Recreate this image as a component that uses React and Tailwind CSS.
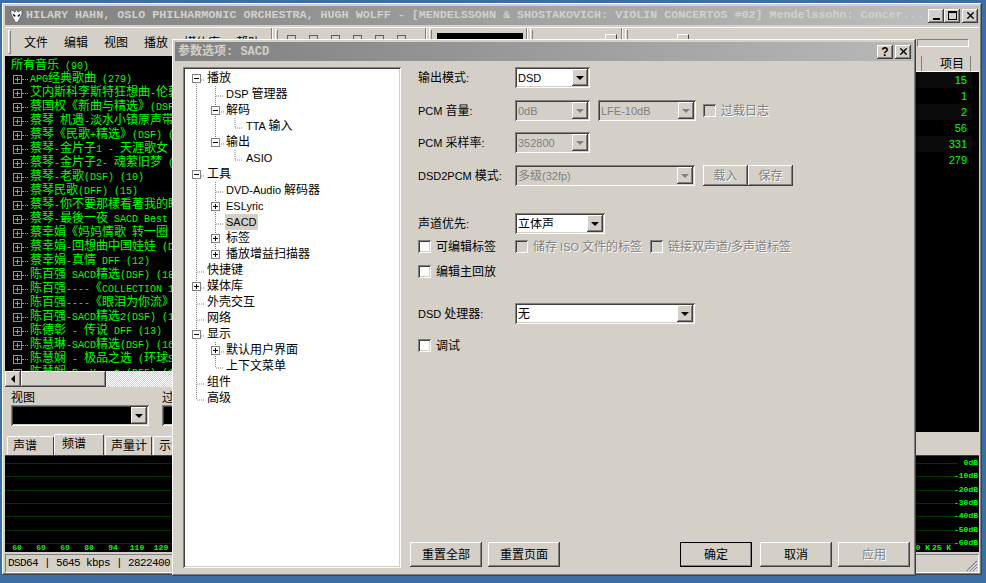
import { X } from "lucide-react";

const RAISED = "shadow-[inset_-1px_-1px_0_#404040,inset_1px_1px_0_#ffffff,inset_-2px_-2px_0_#808080]";
const SUNKEN = "shadow-[inset_1px_1px_0_#808080,inset_-1px_-1px_0_#ffffff,inset_2px_2px_0_#404040,inset_-2px_-2px_0_#d4d0c8]";
const DISABLED = "text-[#808080] [text-shadow:1px_1px_0_#ffffff]";
const CJK = "font-['Liberation_Sans','Noto_Sans_CJK_SC',sans-serif]";
const MONO = "font-['Liberation_Mono','Noto_Sans_CJK_SC',monospace]";

const LIBRARY = [
    "APG经典歌曲 (279)",
    "艾内斯科李斯特狂想曲-伦敦",
    "蔡国权《新曲与精选》(DSF)",
    "蔡琴 机遇-淡水小镇原声带",
    "蔡琴《民歌+精选》(DSF) (",
    "蔡琴-金片子1 - 天涯歌女 (",
    "蔡琴-金片子2- 魂萦旧梦 (D",
    "蔡琴-老歌(DSF) (10)",
    "蔡琴民歌(DFF) (15)",
    "蔡琴-你不要那樣看著我的眼",
    "蔡琴-最後一夜 SACD Best",
    "蔡幸娟《妈妈情歌 转一圈",
    "蔡幸娟-回想曲中国娃娃 (DS",
    "蔡幸娟-真情 DFF (12)",
    "陈百强 SACD精选(DSF) (18",
    "陈百强----《COLLECTION 1",
    "陈百强----《眼泪为你流》",
    "陈百强-SACD精选2(DSF) (1",
    "陈德彰 - 传说 DFF (13)",
    "陈慧琳-SACD精选(DSF) (16",
    "陈慧娴 - 极品之选 (环球SA",
    "陈慧娴 R. Y.. t (DFF) (1",
];

const TREE = [
    { label: "播放", level: 0, box: "-" },
    { label: "DSP 管理器", level: 1 },
    { label: "解码", level: 1, box: "-" },
    { label: "TTA 输入", level: 2 },
    { label: "输出", level: 1, box: "-" },
    { label: "ASIO", level: 2 },
    { label: "工具", level: 0, box: "-" },
    { label: "DVD-Audio 解码器", level: 1 },
    { label: "ESLyric", level: 1, box: "+" },
    { label: "SACD", level: 1, selected: true },
    { label: "标签", level: 1, box: "+" },
    { label: "播放增益扫描器", level: 1, box: "+" },
    { label: "快捷键", level: 0 },
    { label: "媒体库", level: 0, box: "+" },
    { label: "外壳交互", level: 0 },
    { label: "网络", level: 0 },
    { label: "显示", level: 0, box: "-" },
    { label: "默认用户界面", level: 1, box: "+" },
    { label: "上下文菜单", level: 1 },
    { label: "组件", level: 0 },
    { label: "高级", level: 0 },
];

// half-width latin like the bitmap font, full-width CJK
function Mix({ text, latin = "text-[10px] font-['Liberation_Mono']" }) {
    return text.split(/([\x20-\x7e]+)/).map((part, i) =>
        i % 2 ? <span key={i} className={`${latin} whitespace-pre`}>{part}</span> : part
    );
}

function Grip() {
    return <div className="w-[3px] h-[24px] shrink-0 border-l border-t border-white border-r border-b border-r-[#808080] border-b-[#808080]" />;
}

function CaptionButton({ children, className = "" }) {
    return (
        <div className={`w-4 h-[14px] bg-[#d4d0c8] flex items-center justify-center text-black ${RAISED} ${className}`}>
            {children}
        </div>
    );
}

function ExpandBox({ type, color = "border-[#808080]", mark = "bg-black" }) {
    return (
        <span className={`relative w-[9px] h-[9px] shrink-0 border ${color} block`}>
            <span className={`absolute left-[1px] top-[3px] w-[5px] h-[1px] ${mark}`} />
            {type === "+" && <span className={`absolute left-[3px] top-[1px] w-[1px] h-[5px] ${mark}`} />}
        </span>
    );
}

function Arrow({ disabled }) {
    return (
        <span className={`w-[16px] h-[17px] mr-[2px] bg-[#d4d0c8] flex items-center justify-center ${RAISED}`}>
            <span className={`w-0 h-0 border-x-[4px] border-x-transparent border-t-[4px] ${disabled ? "border-t-[#808080]" : "border-t-black"}`} />
        </span>
    );
}

function Combo({ value, width, disabled, black, className = "" }) {
    const bg = black ? "bg-black" : disabled ? "bg-[#d4d0c8]" : "bg-white";
    return (
        <div className={`${width} h-[21px] shrink-0 flex items-center justify-between pl-[3px] ${bg} ${SUNKEN} ${className}`}>
            <span className={`truncate ${disabled ? "text-[#808080]" : "text-black"}`}>
                {value && <Mix text={value} latin="text-[11px] font-['Liberation_Sans']" />}
            </span>
            <Arrow disabled={disabled} />
        </div>
    );
}

function Check({ label, disabled, className = "" }) {
    return (
        <div className={`flex items-center gap-[5px] h-[13px] ${className}`}>
            <span className={`w-[13px] h-[13px] shrink-0 ${disabled ? "bg-[#d4d0c8]" : "bg-white"} ${SUNKEN}`} />
            <span className={disabled ? DISABLED : "text-black"}>
                <Mix text={label} latin="text-[11px] font-['Liberation_Sans']" />
            </span>
        </div>
    );
}

function FormRow({ label, className = "", children }) {
    return (
        <div className={`flex items-center h-[21px] pl-[9px] ${className}`}>
            <span className="w-[97px] shrink-0">
                <Mix text={label} latin="text-[11px] font-['Liberation_Sans']" />
            </span>
            {children}
        </div>
    );
}

function DialogButton({ children, width = "w-[72px]", className = "", disabled }) {
    return (
        <div className={`${width} h-[25px] flex items-center justify-center bg-[#d4d0c8] ${disabled ? DISABLED : "text-black"} ${RAISED} ${className}`}>
            {children}
        </div>
    );
}

function TreeLines() {
    const h = (x1, x2, y) => `M${x1} ${y}H${x2}`;
    const v = (x, y1, y2) => `M${x} ${y1}V${y2}`;
    const d = [
        v(13.5, 14, 330),
        h(14, 22, 10), h(14, 22, 106), h(14, 22, 202), h(14, 22, 218), h(14, 22, 234), h(14, 22, 250), h(14, 22, 266), h(14, 22, 314), h(14, 22, 330),
        v(32.5, 16, 74), h(33, 41, 26), h(38, 41, 42), h(38, 41, 74),
        v(52, 48, 58), h(52, 60, 58), v(52, 80, 90), h(52, 60, 90),
        v(32.5, 112, 186), h(33, 41, 122), h(33, 41, 154),
        v(32.5, 272, 298), h(38, 41, 282), h(33, 41, 298),
    ].join("");
    return (
        <svg className="absolute left-0 top-[3px] pointer-events-none" width="100" height="340">
            <path d={d} stroke="#808080" strokeDasharray="1 1" fill="none" />
        </svg>
    );
}

function Dialog() {
    return (
        <div className={`absolute left-[172px] top-[39px] w-[744px] h-[537px] p-[3px] flex flex-col bg-[#d4d0c8] ${RAISED}`}>
            <div className="h-[19px] shrink-0 flex items-center pl-[3px] pr-[2px] bg-gradient-to-r from-[#808080] to-[#b8b8b8]">
                <span className="flex-1 font-bold text-[#d4d0c8]">
                    <Mix text="参数选项: SACD" latin="text-[12px] font-['Liberation_Mono']" />
                </span>
                <CaptionButton className="font-bold"><span className="text-[12px] font-['Liberation_Sans']">?</span></CaptionButton>
                <CaptionButton className="ml-[2px]"><X size={11} strokeWidth={3} /></CaptionButton>
            </div>
            <div className="flex-1 flex pt-[6px] pl-[8px] pb-[5px] pr-[3px]">
                <div className={`relative w-[218px] bg-white pt-[3px] ${SUNKEN}`}>
                    <TreeLines />
                    {TREE.map((row) => (
                        <div
                            key={row.label}
                            className={`relative h-4 flex items-center ${row.level === 0 ? "pl-[9px]" : row.level === 1 ? "pl-[28px]" : "pl-[48px]"}`}
                        >
                            {row.box ? <span className="bg-white"><ExpandBox type={row.box} /></span> : <span className="w-[9px]" />}
                            <span className={`ml-[5px] pl-[1px] pr-[1px] leading-4 text-black whitespace-nowrap ${row.selected ? "bg-[#d4d0c8]" : "bg-white"}`}>
                                <Mix text={row.label} latin="text-[11px] font-['Liberation_Sans']" />
                            </span>
                        </div>
                    ))}
                </div>
                <div className="flex-1 flex flex-col ml-[8px]">
                    <FormRow label="输出模式:"><Combo value="DSD" width="w-[75px]" /></FormRow>
                    <FormRow label="PCM 音量:" className="mt-[12px]">
                        <Combo value="0dB" width="w-[75px]" disabled />
                        <Combo value="LFE-10dB" width="w-[98px]" disabled className="ml-[8px]" />
                        <Check label="过载日志" disabled className="ml-[7px]" />
                    </FormRow>
                    <FormRow label="PCM 采样率:" className="mt-[11px]"><Combo value="352800" width="w-[75px]" disabled /></FormRow>
                    <FormRow label="DSD2PCM 模式:" className="mt-[12px]">
                        <Combo value="多级(32fp)" width="w-[180px]" disabled />
                        <DialogButton width="w-[45px]" className="ml-[8px] !h-[21px]" disabled>载入</DialogButton>
                        <DialogButton width="w-[45px]" className="!h-[21px]" disabled>保存</DialogButton>
                    </FormRow>
                    <FormRow label="声道优先:" className="mt-[27px]"><Combo value="立体声" width="w-[90px]" /></FormRow>
                    <div className="flex pl-[9px] mt-[6px]">
                        <Check label="可编辑标签" className="w-[97px]" />
                        <Check label="储存 ISO 文件的标签" disabled className="w-[135px]" />
                        <Check label="链接双声道/多声道标签" disabled />
                    </div>
                    <Check label="编辑主回放" className="ml-[9px] mt-[12px]" />
                    <FormRow label="DSD 处理器:" className="mt-[25px]"><Combo value="无" width="w-[180px]" /></FormRow>
                    <Check label="调试" className="ml-[9px] mt-[15px]" />
                    <div className="mt-auto mb-[1px] ml-[1px] flex">
                        <DialogButton>重置全部</DialogButton>
                        <DialogButton className="ml-[6px]">重置页面</DialogButton>
                        <DialogButton className="ml-auto ring-1 ring-black ring-inset">确定</DialogButton>
                        <DialogButton className="ml-[8px]">取消</DialogButton>
                        <DialogButton className="ml-[6px]" disabled>应用</DialogButton>
                    </div>
                </div>
            </div>
        </div>
    );
}

function Logo() {
    return (
        <svg width="13" height="15" viewBox="0 0 13 15" className="shrink-0">
            <path d="M6.5 1 8 4 12 1.5 12 6 9.5 11 7.5 14.5H5.5L3.500 11 1 6 1 1.500 5 4Z" fill="#ffffff" stroke="#303030" strokeWidth="0.6" />
            <path d="M2.500 5.500 5.500 7.500 5 9 3.500 8ZM10.500 5.500 7.500 7.500 8 9 9.500 8Z" fill="#000000" />
        </svg>
    );
}

function TitleBar() {
    return (
        <div className="h-[19px] shrink-0 flex items-center pl-[5px] pr-[1px] bg-gradient-to-r from-[#808080] to-[#c0c0c0]">
            <Logo />
            <span className={`ml-[3px] flex-1 whitespace-nowrap font-bold text-[11.7px] text-[#d4d0c8] ${MONO}`}>
                HILARY HAHN, OSLO PHILHARMONIC ORCHESTRA, HUGH WOLFF - [MENDELSSOHN &amp; SHOSTAKOVICH: VIOLIN CONCERTOS #02] Mendelssohn: Concer...
            </span>
            <CaptionButton className="items-end pb-[3px]"><span className="w-[7px] h-[2px] bg-black" /></CaptionButton>
            <CaptionButton><span className="w-[9px] h-[9px] border border-black border-t-2" /></CaptionButton>
            <CaptionButton className="ml-[2px]"><X size={11} strokeWidth={3} /></CaptionButton>
        </div>
    );
}

function Toolbar() {
    return (
        <div className="h-[29px] mt-[2px] shrink-0 flex border-t border-white">
            <div className="w-[267px] flex items-center pl-[3px] border-r border-[#808080]">
                <Grip />
                <div className="flex gap-4 ml-[13px] pt-[1px] text-black">
                    <span>文件</span><span>编辑</span><span>视图</span><span>播放</span><span>媒体库</span><span>帮助</span>
                </div>
            </div>
            <div className="w-[154px] flex items-start pl-[2px] pt-[1px] border-l border-white border-r border-r-[#808080]">
                <Grip />
                <div className="flex gap-[13px] ml-[9px] mt-[6px]">
                    {[0, 1, 2, 3, 4, 5].map((i) => <span key={i} className="w-[9px] h-[10px] border border-[#606060]" />)}
                </div>
            </div>
            <div className="w-[101px] flex items-start pl-[2px] pt-[1px] border-l border-white border-r border-r-[#808080]">
                <Grip />
                <span className="ml-[5px] mt-[4px] w-[86px] h-[14px] bg-black" />
            </div>
            <div className="w-[95px] flex items-start pl-[2px] pt-[1px] border-l border-white border-r border-r-[#808080]">
                <Grip />
                <span className="ml-[72px] mt-[5px] w-3 h-3 border-t border-l border-white border-r border-r-[#404040]" />
            </div>
            <div className="flex-1 flex items-start pl-[2px] pt-[1px] border-l border-white">
                <Grip />
                <span className="ml-[49px] mt-[5px] w-3 h-3 border-t border-l border-white border-r border-r-[#404040]" />
                <span className="ml-auto mr-[10px] mt-[10px] w-[52px] h-[8px] border border-white border-t-[#808080] border-l-[#808080]" />
            </div>
        </div>
    );
}

function LibraryPanel() {
    return (
        <div className="w-[340px] shrink-0 flex flex-col overflow-hidden">
            <div className="h-[315px] shrink-0 bg-black text-[#00ff00] pt-[2px] overflow-hidden whitespace-nowrap">
                <div className="h-[14px] pl-[6px] leading-[14px]"><Mix text="所有音乐 (90)" /></div>
                {LIBRARY.map((name) => (
                    <div key={name} className="h-[14px] flex items-center pl-[8px] leading-[14px]">
                        <ExpandBox type="+" color="border-[#00ff00]" mark="bg-[#00ff00]" />
                        <span className="w-[6px] h-[1px] border-t border-dotted border-[#00ff00]" />
                        <span className="ml-[2px]"><Mix text={name} /></span>
                    </div>
                ))}
            </div>
            <div className="h-[16px] shrink-0 flex bg-[repeating-conic-gradient(#d4d0c8_0_25%,#ffffff_0_50%)] bg-[length:2px_2px]">
                <span className={`w-[16px] bg-[#d4d0c8] flex items-center justify-center ${RAISED}`}>
                    <span className="w-0 h-0 border-y-[4px] border-y-transparent border-r-[4px] border-r-black" />
                </span>
                <span className={`w-[85px] bg-[#d4d0c8] ${RAISED}`} />
            </div>
            <div className="flex gap-[13px] pl-[6px] pt-[2px]">
                <div className="w-[138px]">
                    <div className="h-[16px] leading-[18px] text-black">视图</div>
                    <Combo width="w-[138px]" black />
                </div>
                <div className="flex-1">
                    <div className="h-[16px] leading-[18px] text-black">过滤</div>
                    <Combo width="w-[138px]" black />
                </div>
            </div>
        </div>
    );
}

const TRACK_COUNTS = ["15", "1", "2", "56", "331", "279"];

function TrackPanel() {
    return (
        <div className="flex-1 flex flex-col">
            <div className="h-[16px] shrink-0 flex justify-end pr-[8px] bg-[#d4d0c8] border-b border-white">
                <span className="w-[50px] text-right pr-[6px] leading-4 text-black border-l border-r border-[#808080]">项目</span>
            </div>
            <div className="h-[360px] shrink-0 bg-black">
                {TRACK_COUNTS.map((n, i) => (
                    <div
                        key={n}
                        className={`h-4 mr-[7px] pr-[5px] text-right text-[#00ff00] text-[11px] leading-4 font-['Liberation_Sans'] ${i % 2 === 0 ? "bg-[#0a0a0a]" : "bg-black"}`}
                    >
                        {n}
                    </div>
                ))}
            </div>
        </div>
    );
}

function Tabs() {
    return (
        <div className="h-[21px] shrink-0 mt-[1px] flex items-end pl-[2px] text-black">
            <span className="w-[47px] h-[19px] pl-[5px] leading-[19px] border-t border-l border-white border-r border-r-[#404040] rounded-t-[2px]">声谱</span>
            <span className="w-[50px] h-[21px] pl-[7px] leading-[19px] border-t border-l border-white border-r border-r-[#404040] rounded-t-[2px]">频谱</span>
            <span className="w-[47px] h-[19px] ml-[1px] pl-[5px] leading-[19px] border-t border-l border-white border-r border-r-[#404040] rounded-t-[2px]">声量计</span>
            <span className="w-[60px] h-[19px] ml-[1px] pl-[5px] leading-[19px] border-t border-l border-white border-r border-r-[#404040] rounded-t-[2px]">示波器</span>
        </div>
    );
}

const FREQ_LEFT = ["60", "69", "69", "80", "94", "110", "129"];
const DB_LABELS = ["0dB", "-10dB", "-20dB", "-30dB", "-40dB", "-50dB", "-60dB"];
const SCALE = `text-[#00ff00] text-[8px] leading-[8px] font-bold ${MONO}`;

function Spectrum() {
    return (
        <div className="h-[97px] shrink-0 bg-black flex pt-[7px] border-t border-[#404040]">
            <div className="flex-1 flex flex-col">
                {DB_LABELS.map((db) => (
                    <div key={db} className="h-[13.33px] shrink-0 border-t border-[#003300]" />
                ))}
                <div className={`-mt-[12px] flex ${SCALE}`}>
                    {FREQ_LEFT.map((f, i) => <span key={i} className="w-[24px] text-center">{f}</span>)}
                    <span className="ml-auto w-[21px] text-center">20 K</span>
                    <span className="w-[21px] mr-[6px] text-center">25 K</span>
                </div>
            </div>
            <div className={`w-[21px] -mt-[4px] flex flex-col items-end pr-[1px] ${SCALE}`}>
                {DB_LABELS.map((db) => <span key={db} className="h-[13.33px] shrink-0 leading-[8px]">{db}</span>)}
            </div>
        </div>
    );
}

function StatusBar() {
    return (
        <div className="h-[19px] mt-[2px] shrink-0 flex border border-[#808080] border-b-white border-r-white">
            <span className={`pl-[2px] leading-[17px] text-[11px] tracking-[-0.6px] text-black whitespace-pre ${MONO}`}>
                DSD64 | 5645 kbps | 2822400
            </span>
            <svg className="ml-auto self-end" width="12" height="12" viewBox="0 0 12 12">
                <path d="M11 1 1 11M11 4 4 11M11 7 7 11" stroke="#808080" strokeWidth="1.2" />
                <path d="M11 2.500 2.500 11M11 5.500 5.500 11M11 8.500 8.500 11" stroke="#ffffff" />
            </svg>
        </div>
    );
}

export default function App() {
    return (
        <div className={`relative w-[986px] h-[583px] overflow-hidden bg-[#3a6ea5] pt-[3px] pl-[2px] text-[12px] leading-none ${CJK}`}>
            <div className={`w-[980px] h-[572px] p-[3px] pr-[3px] flex flex-col bg-[#d4d0c8] ${RAISED}`}>
                <TitleBar />
                <Toolbar />
                <div className="flex h-[377px] shrink-0">
                    <LibraryPanel />
                    <TrackPanel />
                </div>
                <Tabs />
                <Spectrum />
                <StatusBar />
            </div>
            <Dialog />
        </div>
    );
}
